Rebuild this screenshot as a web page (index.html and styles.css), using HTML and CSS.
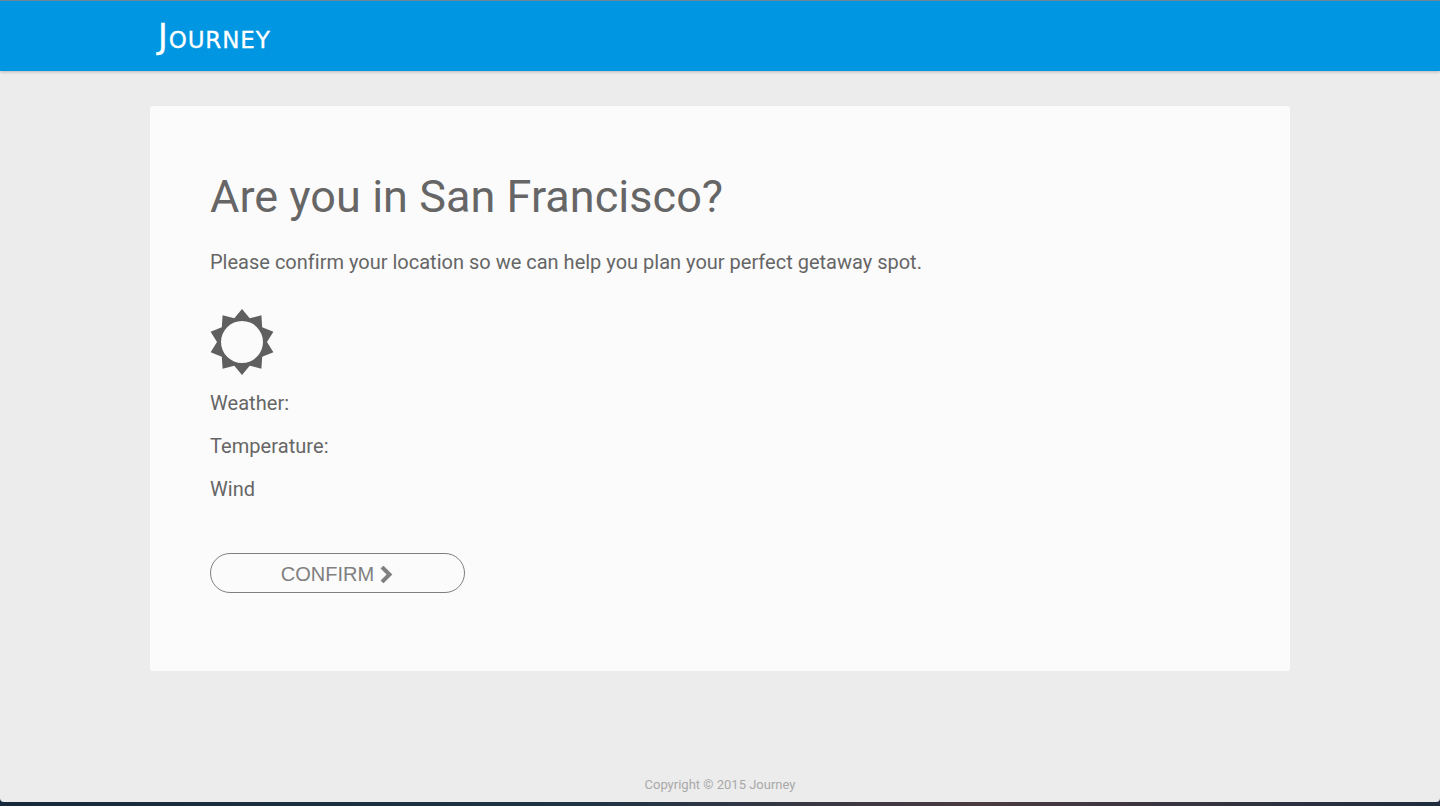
FILE: index.html
```html
<!DOCTYPE html>
<html lang="en">
<head>
<meta charset="utf-8">
<title>Journey</title>
<link rel="stylesheet" href="styles.css">
</head>
<body>
<div class="window">
  <header class="topbar">
    <div class="logo">Journey</div>
  </header>
  <main class="card">
    <h1 class="title">Are you in San Francisco?</h1>
    <p class="lead">Please confirm your location so we can help you plan your perfect getaway spot.</p>
    <svg class="sun" viewBox="-32 -33 64 66" aria-hidden="true">
      <path fill-rule="evenodd" d="M0-33 7.7-23.8 19.4-26.7 20.2-14.7 31.4-10.2 25 0 31.4 10.2 20.2 14.7 19.4 26.7 7.7 23.8 0 33-7.7 23.8-19.4 26.7-20.2 14.7-31.4 10.2-25 0-31.4-10.2-20.2-14.7-19.4-26.7-7.7-23.8ZM21 0A21 21 0 1 0-21 0 21 21 0 1 0 21 0Z"/>
    </svg>
    <p class="stat">Weather:</p>
    <p class="stat">Temperature:</p>
    <p class="stat">Wind</p>
    <button class="confirm" type="button">CONFIRM
      <svg class="chev" viewBox="0 0 13 17" aria-hidden="true"><path d="M2 1 9.5 8.5 2 16" /></svg>
    </button>
  </main>
  <footer class="foot">Copyright © 2015 Journey</footer>
</div>
</body>
</html>
```

FILE: styles.css
```css
* { box-sizing: border-box; }
html, body { margin: 0; height: 806px; overflow: hidden; }
body {
  background: linear-gradient(90deg, #16283c 0%, #1e3346 40%, #4a3a40 68%, #1e2c3e 100%);
  font-family: Roboto, sans-serif;
}
.window {
  height: 802px;
  background: #ececec;
  border-radius: 0 0 4px 4px;
  display: flex;
  flex-direction: column;
  align-items: center;
}
.topbar {
  width: 100%;
  height: 71px;
  flex: none;
  background: #0096e1;
  border-top: 1px solid #6f8794;
  box-shadow: 0 1px 3px rgba(0,0,0,.22);
  padding-left: 158px;
}
.logo {
  font-family: "DejaVu Sans", sans-serif;
  font-variant: small-caps;
  color: #fff;
  font-size: 33px;
  line-height: 72px;
  letter-spacing: .9px;
  -webkit-text-stroke: .3px #fff;
}
.card {
  width: 1140px;
  height: 565px;
  margin-top: 35px;
  flex: none;
  background: #fbfbfb;
  border-radius: 3px;
  padding: 61px 60px 0;
  color: #666;
}
.title { margin: 0; font-size: 45px; line-height: 60px; font-weight: 400; letter-spacing: .04px; }
.lead { margin: 20px 0 0; font-size: 20px; line-height: 30px; letter-spacing: .005px; }
.sun { display: block; width: 64px; height: 66px; margin: 32px 0 7px; fill: #5f5f5f; }
.stat { margin: 0; font-size: 20px; line-height: 43px; letter-spacing: .06px; }
.confirm {
  display: flex;
  align-items: center;
  justify-content: center;
  gap: 6px;
  width: 255px;
  height: 40px;
  margin-top: 42px;
  background: transparent;
  border: 1px solid #7f7f7f;
  border-radius: 20px;
  color: #808080;
  font-family: "Liberation Sans", sans-serif;
  font-size: 20px;
  padding: 2px 1px 0 0;
}
.chev { width: 13px; height: 17px; fill: none; stroke: #808080; stroke-width: 4; }
.foot {
  margin-top: auto;
  height: 25px;
  color: #a9a9a9;
  font-size: 13px;
  line-height: 15px;
}
```
